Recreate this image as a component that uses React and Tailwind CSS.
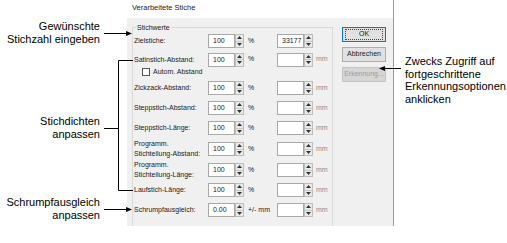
import React from 'react';

// small up/down spinner next to the numeric fields
const Spinner = () => (
  <div className="flex h-full w-[9px] flex-col border border-[#bdbdbd] bg-[#e9e9e9]">
    <div className="flex flex-1 items-center justify-center border-b border-[#c8c8c8]">
      <svg width="5" height="3" viewBox="0 0 5 3"><polygon points="0,3 2.5,0 5,3" fill="#333" /></svg>
    </div>
    <div className="flex flex-1 items-center justify-center">
      <svg width="5" height="3" viewBox="0 0 5 3"><polygon points="0,0 2.5,3 5,0" fill="#333" /></svg>
    </div>
  </div>
);

const SpinInput = ({ value }) => (
  <div className="flex h-[14px] w-[36px] items-stretch">
    <div className="flex-1 border border-[#a8a8a8] bg-white pl-[4px] leading-[12px]">{value}</div>
    <Spinner />
  </div>
);

const Row = ({ label, value = '100', unit = '%', value2 = '', height = 'h-[20px]', showMm = true }) => (
  <div className={`flex items-center ${height}`}>
    <div className="w-[75px] pl-[1px] leading-[10px]">{label}</div>
    <SpinInput value={value} />
    <div className="w-[33px] pl-[4px]">{unit}</div>
    <SpinInput value={value2} />
    {showMm && <div className="pl-[3px] text-[#8c8c8c]">mm</div>}
  </div>
);

const App = () => {
  return (
    <div className="relative flex h-[243px] w-[507px] overflow-hidden bg-white text-black font-['Liberation_Sans',Arial,sans-serif]">
      {/* left annotations */}
      <div className="flex w-[127px] flex-col items-end pr-[27px] text-[11px] leading-[13px]">
        <div className="mt-[20px] text-right">Gewünschte<br />Stichzahl eingeben</div>
        <div className="mt-[69px] text-right">Stichdichten<br />anpassen</div>
        <div className="mt-[55px] text-right">Schrumpfausgleich<br />anpassen</div>
      </div>

      {/* dialog */}
      <div className="flex w-[267px] flex-col text-[7px] text-[#1a1a1a]">
        <div className="h-[18px] border-r border-[#9a9a9a] pl-[5px] pt-[3px] text-[7.5px] leading-[9px]">Verarbeitete Stiche</div>
        <div className="flex h-[208px] border-r border-[#9a9a9a] bg-[#f0f0f0] pl-[5px] pt-[9px]">
          <div className="relative h-full w-[201px] border-l border-r border-t border-[#d9d9d9] pt-[3px]">
            <div className="absolute -top-[5px] left-[3px] bg-[#f0f0f0] px-[1px] leading-[9px]">Stichwerte</div>
            <Row label="Zielstiche:" value2="33177" showMm={false} />
            <Row label="Satinstich-Abstand:" height="h-[17px]" />
            <div className="flex h-[8px] items-center pl-[9px]">
              <div className="h-[8px] w-[8px] border border-[#555] bg-white" />
              <span className="pl-[3px]">Autom. Abstand</span>
            </div>
            <div className="h-[2px]" />
            <Row label="Zickzack-Abstand:" />
            <Row label="Steppstich-Abstand:" />
            <Row label="Steppstich-Länge:" />
            <Row label={<>Programm.<br />Stichteilung-Abstand:</>} height="h-[22px]" />
            <Row label={<>Programm.<br />Stichteilung-Länge:</>} />
            <Row label="Laufstich-Länge:" />
            <Row label="Schrumpfausgleich:" value="0.00" unit="+/- mm" />
          </div>
          <div className="ml-[9px] flex w-[44px] flex-col gap-[5px]">
            <div className="flex h-[15px] items-center justify-center border border-[#0078d7] bg-[#e1e1e1]">
              <div className="flex h-[11px] w-[38px] items-center justify-center border border-dotted border-[#444]">OK</div>
            </div>
            <div className="flex h-[15px] items-center justify-center border border-[#adadad] bg-[#e1e1e1]">Abbrechen</div>
            <div className="flex h-[15px] items-center justify-center border border-[#c4c4c4] bg-[#d6d6d6] text-[#9c9c9c]">Erkennung...</div>
          </div>
        </div>
      </div>

      {/* right annotation */}
      <div className="pl-[11px] pt-[55px] text-[11px] leading-[12.5px]">
        Zwecks Zugriff auf<br />fortgeschrittene<br />Erkennungsoptionen<br />anklicken
      </div>

      {/* callout lines */}
      <svg className="pointer-events-none absolute left-0 top-0" width="507" height="243" viewBox="0 0 507 243">
        <g stroke="#000" strokeWidth="1" fill="none">
          <path d="M104 33.5 H128" />
          <path d="M133 60.5 H118.5 V190.5 H133" />
          <path d="M104 128.5 H118.5" />
          <path d="M104 209.5 H128" />
          <path d="M401 68.5 H384" />
        </g>
        <g fill="#000">
          <polygon points="126,31 132,33.5 126,36" />
          <polygon points="126,207 132,209.5 126,212" />
          <polygon points="385,66 379,68.5 385,71" />
        </g>
      </svg>
    </div>
  );
};

export default App;
